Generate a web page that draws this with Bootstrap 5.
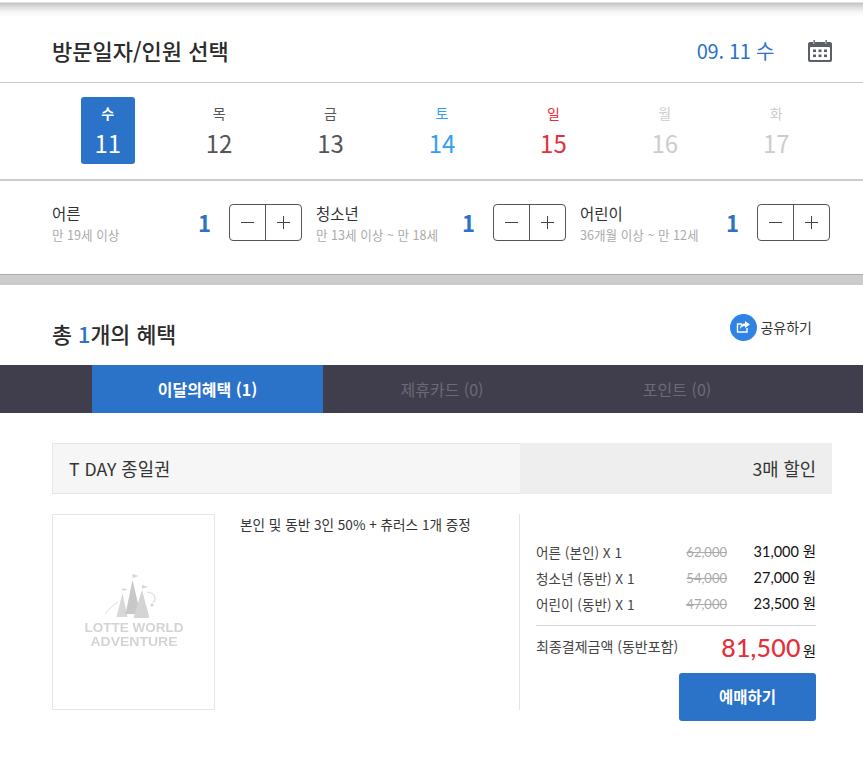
<!DOCTYPE html>
<html lang="ko">
<head>
  <meta charset="UTF-8" />
  <title>방문일자/인원 선택</title>
  <link rel="stylesheet" href="https://cdn.jsdelivr.net/npm/bootstrap@5.3.0/dist/css/bootstrap.min.css" />
  <style>
    body { font-family: "Noto Sans CJK KR", "Noto Sans", sans-serif; color: #333; background: #fff; min-height: 764px; }
    .top-shade { height: 18px; margin-bottom: -18px; background: linear-gradient(#fff 0, #fff 2px, #c4c4c4 3px, #ddd 7px, #f6f6f6 12px, #fff 17px); }
    .pad-side { padding-left: 52px; padding-right: 31px; }
    .head-row { height: 83px; padding-top: 19px; border-bottom: 1px solid #ccc; }
    .head-title { font-size: 22px; font-weight: 500; color: #2b2b2b; }
    .head-date { font-size: 20px; color: #2b72c9; margin-right: 34px; letter-spacing: -.3px; }
    .date-row { height: 98px; padding-top: 14px; border-bottom: 2px solid #ccc; }
    .date-box { width: 54px; height: 67px; padding-top: 6px; border-radius: 3px; line-height: 1; color: #555; }
    .date-box.is-on { background: #2b72c9; color: #fff; }
    .date-box.is-sat { color: #2fa0f5; }
    .date-box.is-sun { color: #e52f3a; }
    .date-box.is-off { color: #ccc; }
    .date-dow { font-size: 14px; height: 21px; line-height: 21px; }
    .date-num { font-size: 24px; line-height: 33px; margin-top: 2px; }
    .people-row { height: 94px; padding-top: 23px; gap: 14px; border-bottom: 1px solid #aaa; }
    .people-item { width: 250px; }
    .people-name { font-size: 15.5px; line-height: 20px; margin-top: -1px; }
    .people-age { font-size: 12.6px; line-height: 18px; color: #aaa; margin-top: 3px; white-space: nowrap; }
    .people-count { font-size: 22px; font-weight: 700; color: #2b72c9; line-height: 37px; margin-right: 18px; }
    .stepper { width: 73px; height: 37px; border: 1px solid #555; border-radius: 4px; }
    .stepper span { flex: 1; }
    .stepper span + span { border-left: 1px solid #555; }
    .band { height: 10px; background: #ccc; }
    .benefit-head { height: 80px; padding-top: 31px; }
    .benefit-title { font-size: 21.7px; font-weight: 500; color: #2b2b2b; line-height: 36px; }
    .benefit-title b { color: #2b72c9; font-weight: 500; }
    .share-btn { font-size: 14px; color: #333; margin-right: 20px; margin-top: -3px; gap: 3px; height: 28px; }
    .share-dot { width: 27px; height: 27px; border-radius: 50%; background: #2f83e4; }
    .tab-bar { height: 48px; background: #403e4d; padding-left: 92px; }
    .tab-cell { font-size: 16px; line-height: 48px; color: #6b6a76; text-align: center; }
    .tab-cell.is-on { background: #2b72c9; color: #fff; font-weight: 700; }
    .offer { padding: 30px 31px 0 52px; }
    .offer-head { height: 51px; line-height: 51px; font-size: 17.7px; }
    .offer-name { width: 468px; background: #f6f6f6; border: 1px solid #e6e6e6; border-right: 0; padding-left: 16px; line-height: 49px; }
    .offer-sale { flex: 1; background: #eee; text-align: right; padding-right: 16px; }
    .offer-body { margin-top: 20px; height: 196px; }
    .offer-pic { width: 163px; height: 196px; border: 1px solid #e4e4e4; }
    .offer-desc { width: 304px; padding: 0 0 0 25px; font-size: 13.6px; line-height: 20px; color: #333; }
    .offer-price { width: 313px; border-left: 1px solid #e4e4e4; padding: 27px 16px 0 16px; font-size: 13.6px; color: #444; }
    .price-line { height: 26px; line-height: 22px; }
    .price-old { width: 41px; font-family: "Lato", sans-serif; font-size: 13px; color: #aaa; text-decoration: line-through; text-align: right; }
    .price-new { width: 89px; font-family: "Lato", "Noto Sans CJK KR", sans-serif; font-size: 14.5px; color: #111; text-align: right; }
    .price-total { border-top: 1px solid #d5d5d5; margin-top: 6px; height: 48px; padding-bottom: 6px; font-size: 14px; }
    .total-num { font-family: "Lato", sans-serif; font-size: 25px; font-weight: 500; color: #e52f3a; letter-spacing: .2px; line-height: 36px; }
    .total-unit { font-size: 14.5px; color: #111; margin-left: 2px; }
    .buy-btn { width: 137px; height: 48px; background: #2b72c9; border: 0; border-radius: 3px; color: #fff; font-size: 15.5px; font-weight: 700; }
    .logo-art { filter: blur(.4px); }
    .logo-word { font-family: "Liberation Sans", sans-serif; font-size: 12px; font-weight: 700; fill: #d4d4d4; text-anchor: middle; }
  </style>
</head>
<body>
  <div class="top-shade"></div>

  <div class="head-row pad-side d-flex align-items-center justify-content-between">
    <div class="head-title">방문일자/인원 선택</div>
    <div class="d-flex align-items-center">
      <span class="head-date">09. 11 수</span>
      <svg width="24" height="22" viewBox="0 0 24 22">
        <path fill="#5b5f66" d="M2 2h3v2h2V2h10v2h2V2h3a2 2 0 0 1 2 2v16a2 2 0 0 1-2 2H2a2 2 0 0 1-2-2V4a2 2 0 0 1 2-2z"/>
        <rect x="5.500" y="0" width="1.300" height="4.500" fill="#5b5f66"/>
        <rect x="17.500" y="0" width="1.300" height="4.500" fill="#5b5f66"/>
        <rect x="2" y="7" width="20" height="13" rx="1" fill="#fff"/>
        <g fill="#5b5f66">
          <rect x="5" y="9.500" width="3" height="2.600"/><rect x="10.500" y="9.500" width="3" height="2.600"/><rect x="16" y="9.500" width="3" height="2.600"/>
          <rect x="5" y="14.500" width="3" height="2.600"/><rect x="10.500" y="14.500" width="3" height="2.600"/><rect x="16" y="14.500" width="3" height="2.600"/>
        </g>
      </svg>
    </div>
  </div>

  <div class="date-row pad-side">
    <div class="row g-0 text-center">
      <div class="col d-flex justify-content-center"><div class="date-box is-on"><div class="date-dow fw-bold">수</div><div class="date-num">11</div></div></div>
      <div class="col d-flex justify-content-center"><div class="date-box"><div class="date-dow">목</div><div class="date-num">12</div></div></div>
      <div class="col d-flex justify-content-center"><div class="date-box"><div class="date-dow">금</div><div class="date-num">13</div></div></div>
      <div class="col d-flex justify-content-center"><div class="date-box is-sat"><div class="date-dow">토</div><div class="date-num">14</div></div></div>
      <div class="col d-flex justify-content-center"><div class="date-box is-sun"><div class="date-dow">일</div><div class="date-num">15</div></div></div>
      <div class="col d-flex justify-content-center"><div class="date-box is-off"><div class="date-dow">월</div><div class="date-num">16</div></div></div>
      <div class="col d-flex justify-content-center"><div class="date-box is-off"><div class="date-dow">화</div><div class="date-num">17</div></div></div>
    </div>
  </div>

  <div class="people-row d-flex pad-side">
    <div class="people-item d-flex">
      <div class="flex-grow-1"><div class="people-name">어른</div><div class="people-age">만 19세 이상</div></div>
      <div class="people-count">1</div>
      <div class="stepper d-flex text-center">
        <span><svg width="13" height="35" viewBox="0 0 13 35"><path d="M0 17.500h13" stroke="#444"/></svg></span>
        <span><svg width="13" height="35" viewBox="0 0 13 35"><path d="M0 17.500h13M6.500 11v13" stroke="#444"/></svg></span>
      </div>
    </div>
    <div class="people-item d-flex">
      <div class="flex-grow-1"><div class="people-name">청소년</div><div class="people-age">만 13세 이상 ~ 만 18세</div></div>
      <div class="people-count">1</div>
      <div class="stepper d-flex text-center">
        <span><svg width="13" height="35" viewBox="0 0 13 35"><path d="M0 17.500h13" stroke="#444"/></svg></span>
        <span><svg width="13" height="35" viewBox="0 0 13 35"><path d="M0 17.500h13M6.500 11v13" stroke="#444"/></svg></span>
      </div>
    </div>
    <div class="people-item d-flex">
      <div class="flex-grow-1"><div class="people-name">어린이</div><div class="people-age">36개월 이상 ~ 만 12세</div></div>
      <div class="people-count">1</div>
      <div class="stepper d-flex text-center">
        <span><svg width="13" height="35" viewBox="0 0 13 35"><path d="M0 17.500h13" stroke="#444"/></svg></span>
        <span><svg width="13" height="35" viewBox="0 0 13 35"><path d="M0 17.500h13M6.500 11v13" stroke="#444"/></svg></span>
      </div>
    </div>
  </div>
  <div class="band"></div>

  <div class="benefit-head pad-side d-flex justify-content-between">
    <div class="benefit-title">총 <b>1</b>개의 혜택</div>
    <div class="share-btn d-flex align-items-center">
      <span class="share-dot d-flex align-items-center justify-content-center">
        <svg width="15" height="14" viewBox="0 0 15 14">
          <path d="M11 8v4H1.500V4H6" fill="none" stroke="#fff" stroke-width="1.400"/>
          <path d="M9 1l5 3.500L9 8V6C6.500 6 5 7 4 9c0-3.500 2-5.500 5-5.500z" fill="#fff"/>
        </svg>
      </span>
      <span>공유하기</span>
    </div>
  </div>

  <div class="tab-bar d-flex">
    <div class="tab-cell is-on" data-w="231">이달의혜택 (1)</div>
    <div class="tab-cell" data-w="238">제휴카드 (0)</div>
    <div class="tab-cell" data-w="232">포인트 (0)</div>
  </div>

  <div class="offer">
    <div class="offer-head d-flex">
      <div class="offer-name">T DAY 종일권</div>
      <div class="offer-sale">3매 할인</div>
    </div>
    <div class="offer-body d-flex">
      <div class="offer-pic d-flex align-items-center justify-content-center">
        <svg class="logo-art" width="110" height="80" viewBox="0 0 110 80">
          <path d="M26 42c4-5 8-9 13-12" fill="none" stroke="#dcdcdc"/>
          <path d="M68 20c8 1 10 6 6 11" fill="none" stroke="#dcdcdc" stroke-width="1.200"/>
          <circle cx="73" cy="33" r="1.500" fill="#d4d4d4"/>
          <path d="M43.500 21v-5l5 1.500-5 1.500" fill="#d4d4d4"/>
          <path d="M53.500 8V2l6 2-6 2" fill="#d4d4d4"/>
          <path d="M63 18v-5l6 2-6 1.500" fill="#d4d4d4"/>
          <path d="M37.500 45l6-24 5 24z" fill="#d8d8d8"/>
          <path d="M46.500 42l7-34 8 34z" fill="#c8c8c8"/>
          <path d="M54.500 46l8.500-28 7.500 28z" fill="#d4d4d4"/>
          <text x="55" y="60" class="logo-word" textLength="99" lengthAdjust="spacingAndGlyphs">LOTTE WORLD</text>
          <text x="55" y="74" class="logo-word" textLength="87" lengthAdjust="spacingAndGlyphs">ADVENTURE</text>
        </svg>
      </div>
      <div class="offer-desc">본인 및 동반 3인 50% + 츄러스 1개 증정</div>
      <div class="offer-price">
        <div class="price-line d-flex"><span class="flex-grow-1">어른 (본인) X 1</span><span class="price-old">62,000</span><span class="price-new">31,000 원</span></div>
        <div class="price-line d-flex"><span class="flex-grow-1">청소년 (동반) X 1</span><span class="price-old">54,000</span><span class="price-new">27,000 원</span></div>
        <div class="price-line d-flex"><span class="flex-grow-1">어린이 (동반) X 1</span><span class="price-old">47,000</span><span class="price-new">23,500 원</span></div>
        <div class="price-total d-flex align-items-center justify-content-between">
          <span>최종결제금액 (동반포함)</span>
          <span><span class="total-num">81,500</span><span class="total-unit">원</span></span>
        </div>
        <div class="text-end"><button class="buy-btn" type="button">예매하기</button></div>
      </div>
    </div>
  </div>
  <script src="https://cdn.jsdelivr.net/npm/bootstrap@5.3.0/dist/js/bootstrap.bundle.min.js"></script>
  <script>
    document.querySelectorAll(".tab-cell").forEach(function (cell) {
      cell.style.width = cell.dataset.w + "px";
    });
  </script>
</body>
</html>
